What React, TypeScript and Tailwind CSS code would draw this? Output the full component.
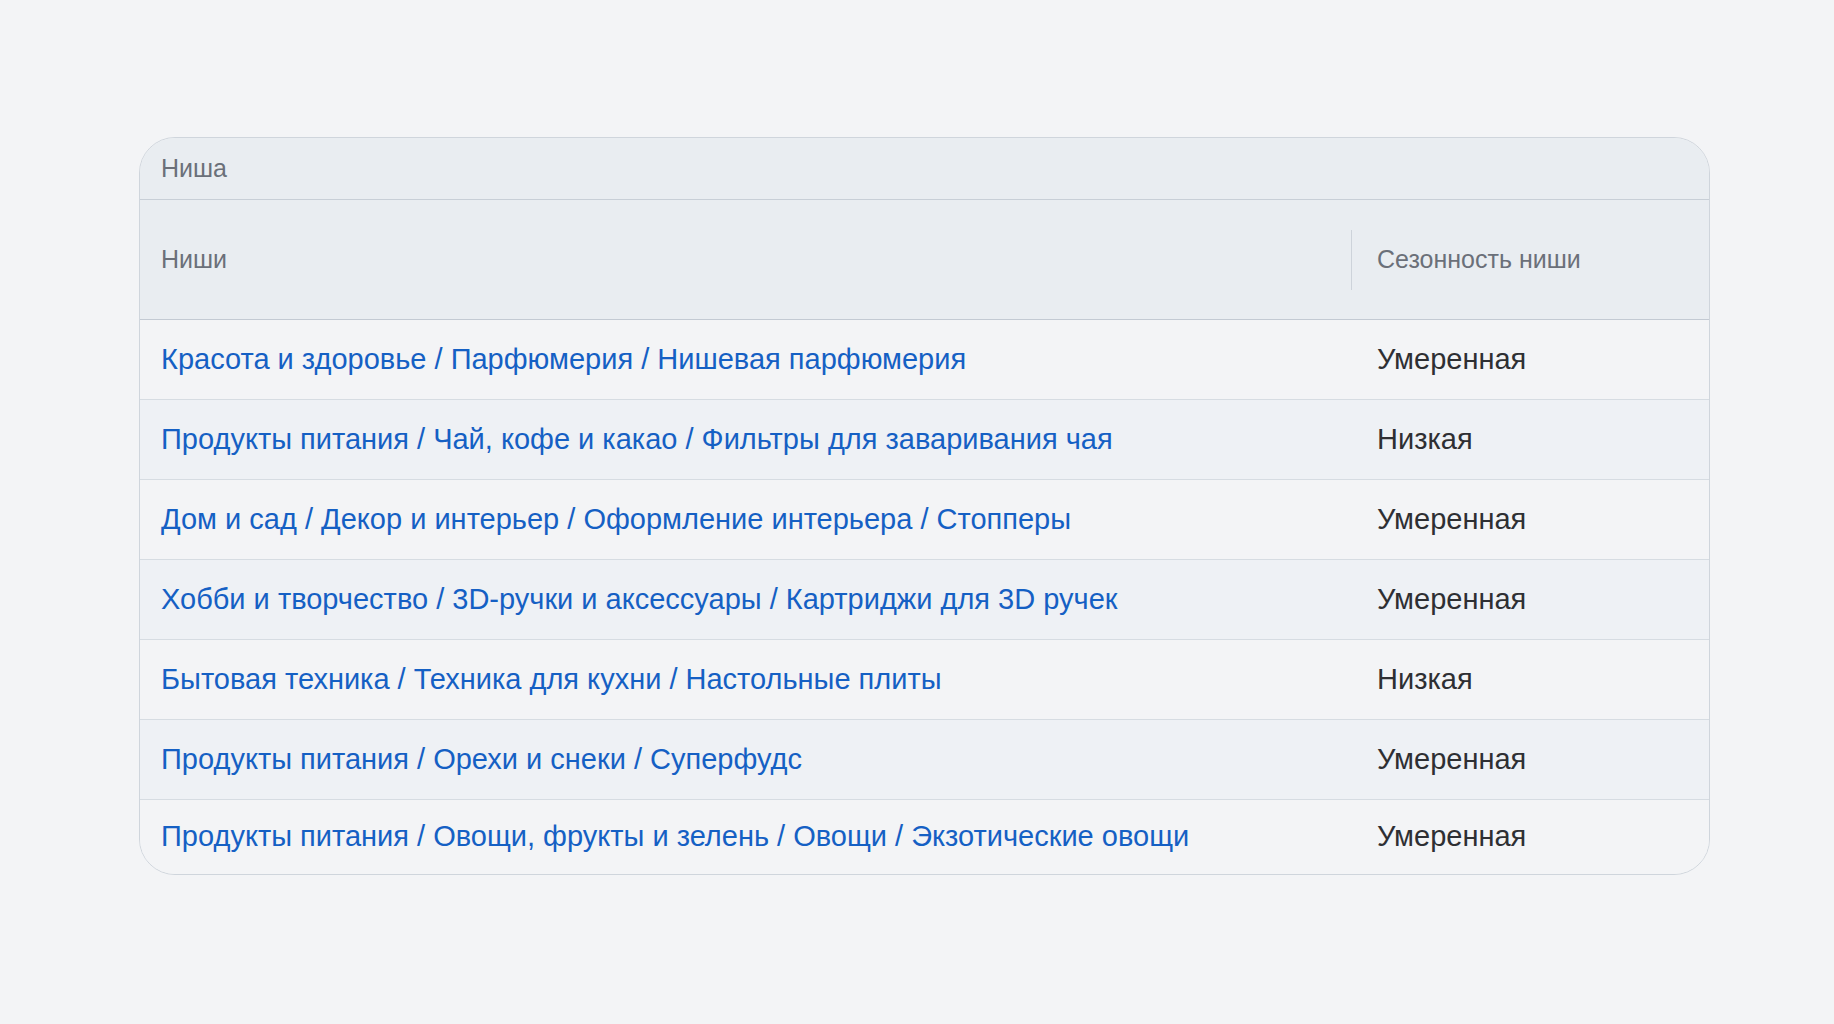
const rows = [
  { niche: "Красота и здоровье / Парфюмерия / Нишевая парфюмерия", season: "Умеренная" },
  { niche: "Продукты питания / Чай, кофе и какао / Фильтры для заваривания чая", season: "Низкая" },
  { niche: "Дом и сад / Декор и интерьер / Оформление интерьера / Стопперы", season: "Умеренная" },
  { niche: "Хобби и творчество / 3D-ручки и аксессуары / Картриджи для 3D ручек", season: "Умеренная" },
  { niche: "Бытовая техника / Техника для кухни / Настольные плиты", season: "Низкая" },
  { niche: "Продукты питания / Орехи и снеки / Суперфудс", season: "Умеренная" },
  { niche: "Продукты питания / Овощи, фрукты и зелень / Овощи / Экзотические овощи", season: "Умеренная" },
]

export default function App() {
  return (
    <div className="min-h-screen bg-[#f3f4f6] pt-[137px] pl-[139px] font-['Liberation_Sans',Arial,sans-serif]">
      <div className="w-[1571px] overflow-hidden rounded-[36px] border border-[#cfd5dc] bg-[#f3f4f6]">
        {/* caption */}
        <div className="flex h-[62px] items-center border-b border-[#c8cfd7] bg-[#e9edf1] pl-[21px] text-[25px] text-[#6b7079]">
          Ниша
        </div>

        {/* column headers */}
        <div className="grid h-[120px] grid-cols-[1211px_1fr] border-b border-[#c3cad3] bg-[#e9edf1] text-[25px] text-[#6b7079]">
          <div className="flex items-center pl-[21px]">Ниши</div>
          <div className="flex items-center">
            <span className="mr-[25px] h-[60px] w-px bg-[#cdd3da]" />
            <span>Сезонность ниши</span>
          </div>
        </div>

        {rows.map((r, i) => (
          <div
            key={i}
            className={`grid grid-cols-[1211px_1fr] text-[29px] ${
              i === rows.length - 1 ? "h-[74px]" : "h-[80px] border-b border-[#d6dce2]"
            } ${i % 2 === 1 ? "bg-[#eef1f5]" : "bg-[#f3f4f6]"}`}
          >
            <div className="flex items-center pl-[21px]">
              <a href="#" className="text-[#1560c4]">
                {r.niche}
              </a>
            </div>
            <div className="flex items-center pl-[26px] text-[#2e2f33]">{r.season}</div>
          </div>
        ))}
      </div>
    </div>
  )
}
